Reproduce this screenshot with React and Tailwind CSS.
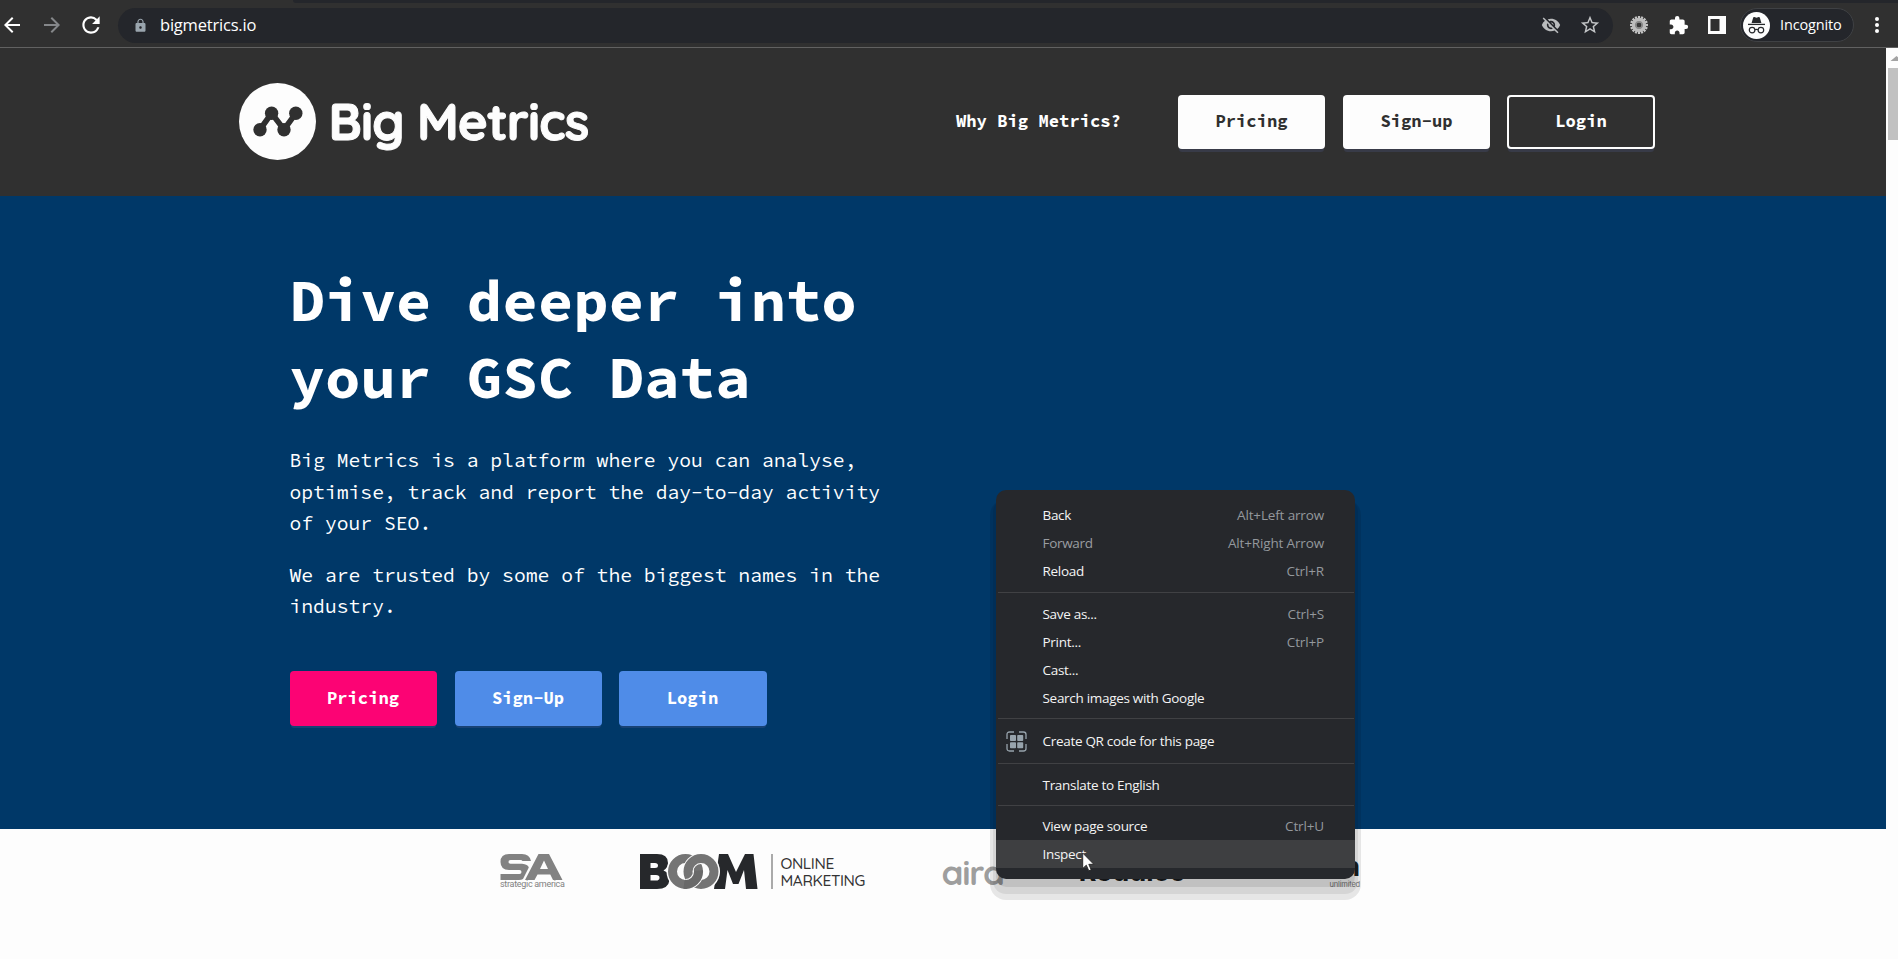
import React from "react";
import {
  MdArrowBack,
  MdArrowForward,
  MdRefresh,
  MdLock,
  MdVisibilityOff,
  MdStarBorder,
  MdExtension,
} from "react-icons/md";

function GearIcon() {
  const teeth = Array.from({ length: 16 }, (_, i) => i * 22.5);
  return (
    <svg width="18" height="18" viewBox="-9 -9 18 18">
      {teeth.map((a) => (
        <rect key={a} x="-1.1" y="-9" width="2.2" height="4" fill="#c4c4c4" transform={`rotate(${a})`} />
      ))}
      <circle r="5.4" fill="none" stroke="#bcbcbc" strokeWidth="3.6" />
      <circle r="3.1" fill="none" stroke="#8a8a8a" strokeWidth="1.6" />
      <circle r="1.9" fill="#3a3a3a" />
    </svg>
  );
}

function IncognitoIcon() {
  return (
    <svg width="27" height="27" viewBox="0 0 27 27">
      <circle cx="13.5" cy="13.5" r="13.5" fill="#fdfdfd" />
      <path d="M8.6 11 L10.2 5.6 Q10.5 4.9 11.3 5.1 L13.5 5.7 L15.7 5.1 Q16.5 4.9 16.8 5.6 L18.4 11 Z" fill="#26282b" />
      <path d="M5 12.4 H22" stroke="#26282b" strokeWidth="1.3" />
      <circle cx="9.1" cy="18.1" r="2.8" fill="none" stroke="#26282b" strokeWidth="1.2" />
      <circle cx="17.9" cy="18.1" r="2.8" fill="none" stroke="#26282b" strokeWidth="1.2" />
      <path d="M11.9 17.8 Q13.5 16.8 15.1 17.8" fill="none" stroke="#26282b" strokeWidth="1.2" />
    </svg>
  );
}

function BrowserBar() {
  return (
    <div className="shrink-0 font-['Open_Sans','Noto_Sans',sans-serif]">
      <div className="flex h-[3px] bg-[#303030]">
        <div className="ml-[293px] flex-1 rounded-bl-[3px] bg-[#24262b]" />
      </div>
      <div className="flex h-11 items-center bg-[#303030] text-white">
        <div className="flex w-[118px] items-center">
          <MdArrowBack size={24} className="shrink-0" />
          <MdArrowForward size={24} className="ml-4 shrink-0 text-[#85878a]" />
          <MdRefresh size={26} className="ml-[14px] shrink-0" />
        </div>
        <div className="flex h-[35px] w-[1495px] items-center rounded-full bg-[#24262b]">
          <MdLock size={15} className="ml-[14.5px] text-[#9aa5ae]" />
          <span className="ml-[12.5px] text-[16.5px] tracking-[-0.2px]">bigmetrics.io</span>
          <MdVisibilityOff size={20} className="ml-auto text-[#b9bbbd]" />
          <MdStarBorder size={22} className="mr-[12px] ml-[18px] text-[#c3c5c7]" />
        </div>
        <div className="ml-[17px] flex items-center">
          <GearIcon />
          <MdExtension size={21} className="ml-[20px]" />
          <svg width="18" height="18" viewBox="0 0 18 18" className="ml-[19px]">
            <rect width="18" height="18" fill="#fdfdfd" />
            <rect x="2.5" y="3" width="9" height="12" fill="#303030" />
          </svg>
        </div>
        <div className="ml-[14px] flex h-[34px] w-[114px] items-center rounded-full border border-[#3f4144] bg-[#24262b] pl-[2px]">
          <IncognitoIcon />
          <span className="ml-[10px] text-[14.5px] tracking-[-0.15px]">Incognito</span>
        </div>
        <svg width="6" height="18" viewBox="0 0 6 18" className="ml-[20px]">
          <circle cx="3" cy="3" r="2" fill="#fff" />
          <circle cx="3" cy="9" r="2" fill="#fff" />
          <circle cx="3" cy="15" r="2" fill="#fff" />
        </svg>
      </div>
      <div className="h-px bg-[#616161]" />
    </div>
  );
}

function Logo() {
  return (
    <div className="flex items-center pb-[1px]">
      <svg width="77" height="77" viewBox="0 0 77 77">
        <circle cx="38.5" cy="38.5" r="38.5" fill="#fdfdfd" />
        <path d="M21 46.5 L32.6 30.3 L45 46.5 L56.8 30.3" fill="none" stroke="#303030" strokeWidth="5.6" />
        <circle cx="21" cy="46.7" r="6.7" fill="#303030" />
        <circle cx="32.6" cy="30.2" r="6.7" fill="#303030" />
        <circle cx="45" cy="46.7" r="6.7" fill="#303030" />
        <circle cx="56.8" cy="30.2" r="6.7" fill="#303030" />
      </svg>
      <span className="mb-[2px] ml-[12.5px] font-['Quicksand','Lato',sans-serif] text-[51px] leading-[64px] font-bold tracking-[-0.95px] text-[#fdfdfd] [-webkit-text-stroke:1px_#fdfdfd]">
        Big Metrics
      </span>
    </div>
  );
}

function Header() {
  return (
    <header className="flex h-[148px] shrink-0 items-center bg-[#303030] pr-[231px] pl-[239px] text-[17.2px] font-bold text-white">
      <Logo />
      <span className="ml-auto">Why Big Metrics?</span>
      <div className="ml-[57px] flex gap-[18px] text-[#303030]">
        <HeaderButton className="bg-[#fdfdfd]">Pricing</HeaderButton>
        <HeaderButton className="bg-[#fdfdfd]">Sign-up</HeaderButton>
        <HeaderButton className="-ml-[1px] w-[148px] border-2 border-[#fdfdfd] bg-[#303030] text-white">Login</HeaderButton>
      </div>
    </header>
  );
}

function HeaderButton({ className, children }) {
  return (
    <button className={`h-[54px] min-w-[147px] rounded-[4px] shadow-[0_4px_0_-1px_#383b48] ${className}`}>
      {children}
    </button>
  );
}

function HeroButton({ className, children }) {
  return (
    <button className={`h-[55px] min-w-[147px] rounded-[4px] pt-[2px] shadow-[0_3px_0_-1px_#174275] ${className}`}>
      {children}
    </button>
  );
}

function Hero() {
  return (
    <section className="h-[633px] shrink-0 bg-[#003868] pt-[65.8px] pl-[289.5px] text-white">
      <h1 className="text-[59.1px] leading-[77.2px] font-bold">
        Dive deeper into
        <br />
        your GSC Data
      </h1>
      <div className="mt-[29px] flex w-[610px] flex-col gap-[20px] text-[19.7px] leading-[31.5px]">
        <p>Big Metrics is a platform where you can analyse, optimise, track and report the day-to-day activity of your SEO.</p>
        <p>We are trusted by some of the biggest names in the industry.</p>
      </div>
      <div className="mt-[48px] flex gap-[18px] text-[17.2px] font-bold">
        <HeroButton className="bg-[#fc0374]">Pricing</HeroButton>
        <HeroButton className="bg-[#4f8ce8]">Sign-Up</HeroButton>
        <HeroButton className="-ml-[1px] w-[148px] bg-[#4f8ce8]">Login</HeroButton>
      </div>
    </section>
  );
}

function Clients() {
  return (
    <section className="flex flex-1 items-start bg-[#fdfdfd] pt-[25px] pl-[500px]">
      <div className="w-[66px] text-[#828282]">
        <svg width="66" height="26" viewBox="0 0 66 26">
          <path d="M9 0 H22 Q29.500 0 31 7 H22.500 Q22 6 20.500 6 H10.500 Q8.500 6 8.500 8 Q8.500 9.800 10.500 9.800 H22 Q28 10.200 28.800 13.500 L23 25 Q21.500 26 19 26 H0.500 V20 H19.500 Q21.500 20 21.500 18 Q21.500 16 19.500 16 H9 Q0.500 15.800 0.500 8 Q0.500 0 9 0 Z" fill="#828282" />
          <path fillRule="evenodd" d="M25 26 L38.500 0 H49 L62.500 26 H53 L50.300 20.500 H37.500 L34.500 26 Z M40 15 H48 L44 6.500 Z" fill="#828282" />
        </svg>
        <p className="font-['Roboto',sans-serif] text-[9px] leading-[9px] tracking-[-0.300px] whitespace-nowrap">strategic america</p>
      </div>
      <div className="ml-[74px] flex items-start">
        <svg width="118" height="35" viewBox="0 0 118 35">
          <path fillRule="evenodd" d="M0 0 H17 Q28 0 28 9 Q28 14 23.5 16.5 Q30 19 29.5 26 Q28.5 35 17 35 H0 Z M10.5 9 V14 H15 Q18 14 18 11.500 Q18 9 15 9 Z M10.5 21 V26.500 H16 Q19.500 26.500 19.500 23.700 Q19.500 21 16 21 Z" fill="#26282b" />
          <path d="M74 35 L79 0 H88 L96 18 L105 0 H113.500 L117.500 35 H106 L104 16 L98.500 30 H93 L87.500 16 L85 35 Z" fill="#26282b" />
          <circle cx="45.500" cy="17.500" r="19" fill="#fdfdfd" />
          <circle cx="61" cy="17.500" r="19" fill="#fdfdfd" />
          <circle cx="45.500" cy="17.500" r="13" fill="none" stroke="#747474" strokeWidth="9" />
          <circle cx="61" cy="17.500" r="13" fill="none" stroke="#fdfdfd" strokeWidth="10.800" />
          <circle cx="61" cy="17.500" r="13" fill="none" stroke="#747474" strokeWidth="9" />
          <path d="M45.500 30.500 A13 13 0 0 0 58.500 17.500" fill="none" stroke="#fdfdfd" strokeWidth="10.800" />
          <path d="M44 30.400 A13 13 0 0 0 58.500 16.500" fill="none" stroke="#696969" strokeWidth="9" />
        </svg>
        <div className="ml-[13px] h-[35px] w-[1.500px] bg-[#aaaaaa]" />
        <div className="mt-[1px] ml-[8px] w-[114px] font-['Quicksand','Lato',sans-serif] text-[15.500px] leading-[16.500px] font-medium text-[#333]">
          <p className="tracking-[-0.4px]">ONLINE</p>
          <p className="tracking-[-0.4px]">MARKETING</p>
        </div>
      </div>
      <span className="ml-[47px] font-['Quicksand','Lato',sans-serif] text-[35px] leading-[36px] font-bold tracking-[-1.200px] text-[#9e9e9e]">
        aira
      </span>
      <span className="mt-[3px] ml-[75px] font-['Inter',sans-serif] text-[27px] leading-[30px] font-bold text-[#1c1e21]">
        Reddico
      </span>
      <div className="-mt-[1px] ml-auto flex flex-col items-end pr-[526px] font-['Inter',sans-serif]">
        <span className="text-[27px] leading-[28px] font-bold text-[#1c1e21]">n</span>
        <span className="text-[7.500px] leading-[8px] tracking-[-0.200px] text-[#777]">unlimited</span>
      </div>
    </section>
  );
}

function Item({ label, keys, disabled, active }) {
  return (
    <div className={`flex h-7 items-center justify-between pt-[1px] pr-[31px] pl-[46.500px] ${active ? "bg-[#3e3f41]" : ""}`}>
      <span className={disabled ? "text-[#9a9da1]" : ""}>{label}</span>
      <span className="tracking-[-0.150px] text-[#94989d]">{keys}</span>
    </div>
  );
}

function Separator() {
  return <div className="mx-[1.500px] h-px bg-[#404144]" />;
}

function QrIcon() {
  return (
    <svg width="21" height="21" viewBox="0 0 21 21" className="absolute left-[10px]" fill="#97a3ac">
      <path d="M1 8 V3.500 Q1 1 3.500 1 H8 M13 1 H17.500 Q20 1 20 3.500 V8 M20 13 V17.500 Q20 20 17.500 20 H13 M8 20 H3.500 Q1 20 1 17.500 V13" fill="none" stroke="#97a3ac" strokeWidth="1.300" />
      <rect x="4" y="4" width="6" height="6" rx="0.800" />
      <rect x="11.200" y="4" width="6" height="6" rx="0.800" />
      <rect x="4" y="11.200" width="6" height="6" rx="0.800" />
      <rect x="11.200" y="11.200" width="6" height="6" rx="0.800" />
    </svg>
  );
}

function ContextMenu() {
  return (
    <div className="absolute top-[490px] left-[996px] h-[389px] w-[359px] rounded-[10px] bg-[#26282c] pt-[11px] font-['Open_Sans','Noto_Sans',sans-serif] text-[13.500px] tracking-[-0.300px] text-[#f4f4f4] shadow-[0_8px_0_0_rgba(0,0,0,0.09),0_12px_0_3px_rgba(0,0,0,0.07),0_15px_0_6px_rgba(0,0,0,0.09)]">
      <Item label="Back" keys="Alt+Left arrow" />
      <Item label="Forward" keys="Alt+Right Arrow" disabled />
      <Item label="Reload" keys="Ctrl+R" />
      <div className="h-[7px]" />
      <Separator />
      <div className="h-[7px]" />
      <Item label="Save as..." keys="Ctrl+S" />
      <Item label="Print..." keys="Ctrl+P" />
      <Item label="Cast..." />
      <Item label="Search images with Google" />
      <div className="h-[6px]" />
      <Separator />
      <div className="relative flex h-[44px] flex-col justify-center">
        <QrIcon />
        <Item label="Create QR code for this page" />
      </div>
      <Separator />
      <div className="flex h-[41px] flex-col justify-center">
        <Item label="Translate to English" />
      </div>
      <Separator />
      <div className="h-[6px]" />
      <Item label="View page source" keys="Ctrl+U" />
      <Item label="Inspect" active />
    </div>
  );
}

export default function App() {
  return (
    <div className="relative flex h-[959px] w-[1898px] flex-col overflow-hidden font-['Source_Code_Pro','Liberation_Mono',monospace]">
      <BrowserBar />
      <div className="flex min-h-0 flex-1">
        <main className="flex w-[1886px] flex-col">
          <Header />
          <Hero />
          <Clients />
        </main>
        <div className="w-3 overflow-hidden bg-[#fdfdfd] pt-2 pl-[2px]">
          <svg width="14" height="5" viewBox="0 0 14 5" className="ml-[2px] max-w-none">
            <path d="M0.500 5 L6.500 0 L12.500 5 Z" fill="#a3a3a3" />
          </svg>
          <div className="mt-[7px] h-[72px] bg-[#c1c1c1]" />
        </div>
      </div>
      <ContextMenu />
      <svg width="13" height="20" viewBox="0 0 13 20" className="absolute top-[852px] left-[1082px]">
        <path d="M0.700 1 V16.500 L4.300 13.200 L6.800 18.800 L9.200 17.800 L6.800 12.300 H11.800 Z" fill="#fff" stroke="#222" strokeWidth="0.900" />
      </svg>
    </div>
  );
}
